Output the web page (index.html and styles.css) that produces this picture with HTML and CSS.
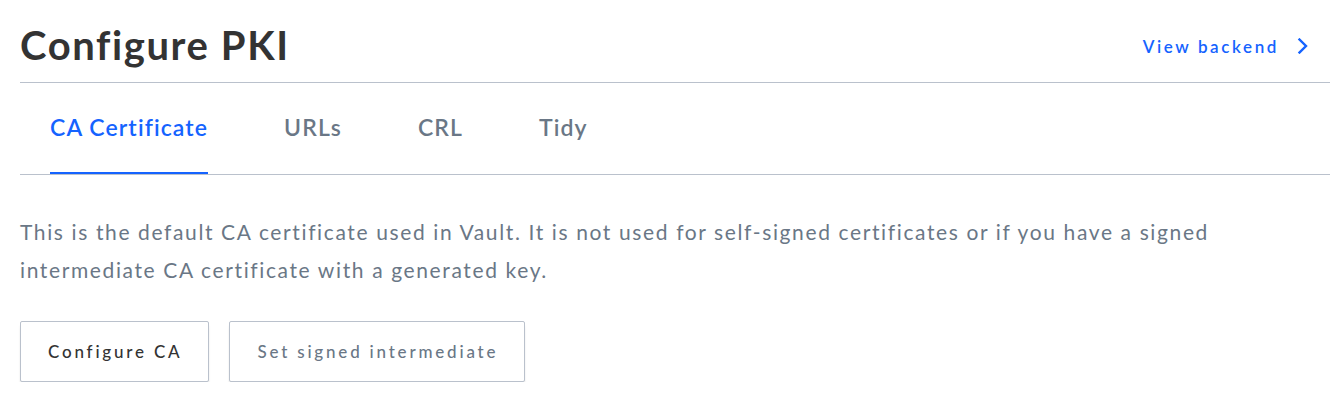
FILE: index.html
```html
<!DOCTYPE html>
<html lang="en">
<head>
<meta charset="utf-8">
<title>Configure PKI</title>
<link rel="stylesheet" href="styles.css">
</head>
<body>
<div class="page">
  <header class="page-header">
    <h1 class="title">Configure PKI</h1>
    <a class="backend-link" href="#">View backend
      <svg class="chevron" width="12" height="16" viewBox="0 0 12 16" aria-hidden="true"><polyline points="2.5,1.5 9,8 2.5,14.5" fill="none" stroke="#1563ff" stroke-width="2.4" stroke-linecap="square" stroke-linejoin="miter"/></svg>
    </a>
  </header>
  <nav class="tabs">
    <a class="tab is-active" href="#">CA Certificate</a>
    <a class="tab" href="#">URLs</a>
    <a class="tab" href="#">CRL</a>
    <a class="tab" href="#">Tidy</a>
  </nav>
  <p class="description">This is the default CA certificate used in Vault. It is not used for self-signed certificates or if you have a signed intermediate CA certificate with a generated key.</p>
  <div class="actions">
    <button class="btn btn-dark" type="button">Configure CA</button>
    <button class="btn btn-grey" type="button">Set signed intermediate</button>
  </div>
</div>
</body>
</html>
```
FILE: styles.css
```css
html, body {
  margin: 0;
  padding: 0;
  background: #ffffff;
}
body {
  font-family: "Lato", "Open Sans", sans-serif;
  color: #333840;
}
.page {
  padding-left: 20px;
}
.page-header {
  display: flex;
  align-items: center;
  justify-content: space-between;
  padding-top: 22px;
  padding-bottom: 14px;
  border-bottom: 1px solid #bac1cc;
}
.title {
  margin: 0;
  font-size: 40px;
  line-height: 46px;
  font-weight: 700;
  color: #333333;
  letter-spacing: 1.6px;
}
.backend-link {
  display: flex;
  align-items: center;
  gap: 18px;
  margin-right: 21px;
  margin-top: 2px;
  color: #1563ff;
  text-decoration: none;
  font-size: 17px;
  font-weight: 600;
  letter-spacing: 2.6px;
}
.chevron {
  display: block;
}
.tabs {
  display: flex;
  gap: 76px;
  padding-left: 30px;
  border-bottom: 1px solid #bac1cc;
}
.tab {
  display: block;
  padding-top: 29px;
  height: 91px;
  box-sizing: border-box;
  font-size: 23px;
  line-height: 30px;
  font-weight: 600;
  color: #6a7786;
  text-decoration: none;
  letter-spacing: 1.1px;
  border-bottom: 2px solid transparent;
}
.tab.is-active {
  color: #1563ff;
  border-bottom-color: #1563ff;
}
.description {
  margin: 38px 0 0 0;
  max-width: 1220px;
  font-size: 21px;
  line-height: 38px;
  font-weight: 400;
  color: #6a7786;
  letter-spacing: 1.62px;
}
.actions {
  display: flex;
  gap: 20px;
  margin-top: 32px;
}
.btn {
  height: 61px;
  padding: 0 26px 0 27px;
  border: 1px solid #bac1cc;
  border-radius: 2px;
  background: #ffffff;
  box-shadow: 0 4px 3px -1px rgba(0, 0, 0, 0.2);
  font-family: "Lato", "Open Sans", sans-serif;
  font-size: 17px;
  font-weight: 500;
  letter-spacing: 2.8px;
  cursor: pointer;
}
.btn-dark {
  color: #333333;
}
.btn-grey {
  color: #6a7786;
}
```
